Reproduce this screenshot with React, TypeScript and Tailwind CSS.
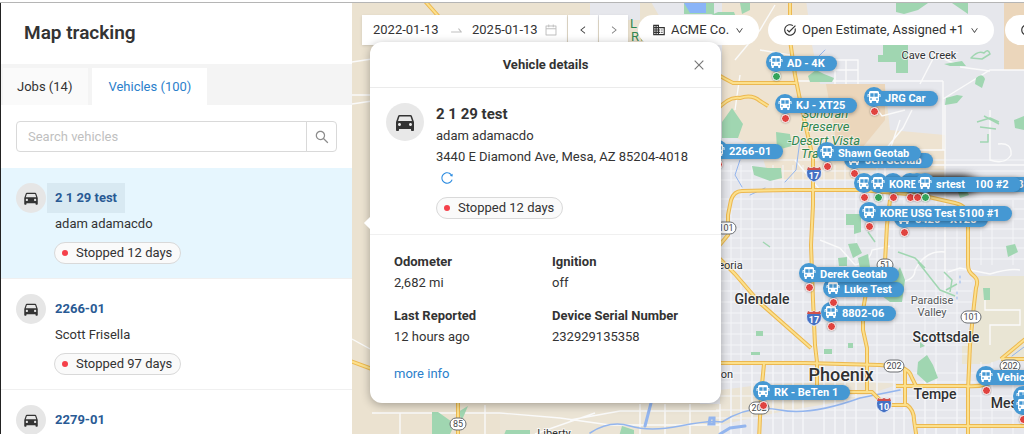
import type { ReactNode } from 'react'
import clsx from 'clsx'
import {
  AiOutlineCalendar,
  AiOutlineClose,
  AiOutlineDown,
  AiOutlineLeft,
  AiOutlineReload,
  AiOutlineRight,
  AiOutlineSearch,
  AiOutlineSwapRight,
} from 'react-icons/ai'
import { MdBusiness, MdDirectionsCar, MdTaskAlt } from 'react-icons/md'

type Vehicle = { name: string; driver: string; status: string }

const vehicles: Vehicle[] = [
  { name: '2 1 29 test', driver: 'adam adamacdo', status: 'Stopped 12 days' },
  { name: '2266-01', driver: 'Scott Frisella', status: 'Stopped 97 days' },
  { name: '2279-01', driver: '', status: '' },
]

const details = [
  { label: 'Odometer', value: '2,682 mi' },
  { label: 'Ignition', value: 'off' },
  { label: 'Last Reported', value: '12 hours ago' },
  { label: 'Device Serial Number', value: '232929135358' },
]

// x / y is the position dot, measured from the top left corner of the map
type Pin = { name?: string; x: number; y: number; moving?: boolean; crowded?: boolean }

const pins: Pin[] = [
  { name: '2266-01', x: 366, y: 161 },
  { name: 'AD - 4K', x: 424, y: 73, moving: true },
  { name: 'JRG Car', x: 522, y: 108 },
  { name: 'KJ - XT25', x: 433, y: 115 },
  { name: 'Jen Geotab', x: 502, y: 170 },
  { name: 'Shawn Geotab', x: 475, y: 163 },
  { x: 512, y: 194 },
  { x: 558, y: 194, crowded: true },
  { x: 565, y: 194, crowded: true },
  { name: 'KORE USG Test 5100 #3', x: 541, y: 194 },
  { name: 'KORE USG Test 5100 #2', x: 526, y: 194, moving: true },
  { name: 'srtest', x: 573, y: 194, moving: true, crowded: true },
  { name: '5420 - XT28', x: 552, y: 229 },
  { name: 'KORE USG Test 5100 #1', x: 517, y: 223 },
  { name: '8802-06', x: 479, y: 323 },
  { name: 'Luke Test', x: 481, y: 299 },
  { name: 'Derek Geotab', x: 457, y: 284 },
  { name: 'RK - BeTen 1', x: 411, y: 402 },
  { name: 'Vehicle 12', x: 634, y: 387 },
  { x: 671, y: 407 },
  { x: 671, y: 416 },
]

const highways = [
  'M790 0V40L795 75L802 110L813 158V205L811 245L813 300L815 345L817 362V388',
  'M718 247L728 235V215L731 200Q734 191 742 191L790 190H860L920 195L955 203Q968 206 968 218V265Q968 272 974 276Q979 280 976 288L974 305L970 345L968 390V440',
  'M890 200L887 225L885 262L868 282L863 310V330L867 348V392',
  'M718 257L735 274L760 303L811 348',
  'M715 363H805L880 365L900 367Q910 370 912 378L916 386H965Q985 388 1000 378',
  'M764 364L761 395L759 440',
  'M845 392H872L885 405H907Q914 410 914 420L917 440',
  'M905 370V405M896 386H920M915 426H1030M1001 359L1012 350L1030 335M1001 359H1030',
  'M715 73Q725 79 733 83H797M715 112Q728 96 740 98Q752 94 760 101L768 106',
  'M345 359L372 369M458 400V440M424 0L440 18',
]

const parks = [
  'M700 20L718 12H734L740 28H718V42H700Z',
  'M684 3H714V14H684ZM740 3H750V10L742 14Z',
  'M883 45H908V73H896V62H878V55H883ZM896 3H928L918 10L904 14L896 12ZM952 3H968V14Z',
  'M722 122L732 108L743 124L738 138H722ZM776 132L790 134L792 146L777 150ZM752 166L768 168L781 168L782 178L770 181L754 175Z',
  'M808 76L816 70L824 74L834 78L832 82L810 82Z',
  'M946 98L957 95L963 96L957 103L945 105ZM976 78Q982 72 985 79L982 88L975 84ZM846 214H861V232L854 234V225H846Z',
  'M848 244L857 243L862 253L853 258ZM838 258L847 257V266H839ZM858 258L868 254L870 267L860 269ZM900 267L905 280L902 302H890L882 296L886 280L896 274Z',
  'M983 288H990V300H984ZM1006 246L1015 244L1018 252L1008 257ZM918 362L927 355L933 365L938 378L927 383L917 374Z',
  'M756 331H763V336H756ZM824 349H832V354H824ZM848 343H853V348H848ZM751 352H760V355H751ZM920 342L925 346L920 348Z',
  'M432 412H438L455 424L447 440H432ZM506 430H530V440H502ZM622 426L634 430V440H618ZM458 412L468 406L462 420Z',
  'M957 189L965 187L969 195L960 198ZM1014 120L1024 116V130L1015 128ZM944 64L962 61L966 66L950 66Z',
]

const minorRoads = [
  'M795 81H943M943 81V150M820 60H858V84M835 60V84M846 60V84M808 70H858M943 99L990 70H1024M960 67L990 71M920 84L935 55L958 65',
  'M900 120L885 165V200M912 110L903 128L885 150M945 105V300M885 150H945M885 165H1024M915 190H1000M990 110V160Q1005 165 1011 155Q1012 142 998 144',
  'M735 60L760 30L775 5M740 75L735 110M760 50L790 55M870 100L882 116L905 110M795 160L820 190',
  'M372 413H500L560 418L610 425H720M400 413V434M485 405V434M535 434L595 413M640 404V434M665 404V434M690 404V434M720 404V434M570 420L620 411H720',
  'M352 62L372 59M352 95H372M352 104L372 101M352 339L372 350',
  'M900 282Q915 280 915 270Q925 250 945 252M820 240L840 248L855 265Q870 262 872 250L890 246M948 272L960 268L990 274Q1010 268 1020 270M985 290V310H1020V325H990V345',
]

const streetRows = [160, 171, 180, 199, 209, 219, 229, 238, 248, 259, 270, 281, 291, 302, 313, 323, 334, 345, 354, 373, 382, 396, 410, 418]
const streetCols = [731, 741, 752, 773, 783, 793, 803, 824, 835, 845, 856, 877, 894, 904, 925, 936, 957, 981, 992, 1013]

const routes = [
  { label: '51', x: 885, y: 265 },
  { label: '101', x: 971, y: 317 },
  { label: '202', x: 894, y: 366 },
  { label: '202', x: 1010, y: 366 },
  { label: '202', x: 759, y: 408 },
  { label: '101', x: 726, y: 228 },
  { label: '85', x: 458, y: 424 },
]

const interstates = [
  { label: '17', x: 814, y: 174 },
  { label: '17', x: 814, y: 318 },
  { label: '10', x: 884, y: 405 },
]

function MapBackground() {
  return (
    <svg
      className="absolute inset-0 h-full w-full font-['Roboto',sans-serif]"
      viewBox="352 3 672 431"
      preserveAspectRatio="xMinYMin slice"
      aria-hidden="true"
    >
      <rect x="352" y="0" width="672" height="440" fill="#e6e7ec" />
      {/* desert */}
      <path d="M352 0H700V440H352Z" fill="#ebe2d0" />
      <path d="M590 0H640V20H590ZM650 0H760L748 50L720 70H690Z" fill="#e6e7ec" />
      <path d="M722 0H806L812 45L820 84L885 85L890 130L945 135V190L890 165L850 180H770L760 150L722 130Z" fill="#eee3d1" />
      <path d="M826 84H885V120L862 148L836 140Z" fill="#ebd6bb" />
      <path d="M1004 3H1024V70H1004Z" fill="#ebd6bb" />
      <path d="M978 276H1024V358H1004L988 364H962V345L974 340Z" fill="#e9e5d4" />
      <path d="M720 390L760 385L850 380L900 384L850 400L780 412L720 425V440H500V404H720Z" fill="#ebe4d5" />

      {/* street grid */}
      <g stroke="#f4f5f8" strokeWidth="1" fill="none">
        {streetRows.map((y) => (
          <path key={y} d={`M716 ${y}H${y > 260 && y < 360 ? 972 : 1024}`} />
        ))}
        {streetCols.map((x) => (
          <path key={x} d={`M${x} ${x > 890 ? 200 : 165}V${x > 978 ? 265 : 434}M${x} 362V434`} />
        ))}
      </g>
      <g stroke="#fafafa" strokeWidth="1.4" fill="none">
        {minorRoads.map((d) => (
          <path key={d} d={d} />
        ))}
      </g>

      {parks.map((d) => (
        <path key={d} d={d} fill="#a0d6b1" />
      ))}
      <g fill="none" stroke="#a0d6b1" strokeWidth="1.5" strokeLinejoin="round">
        <path d="M971 58Q978 50 984 53Q988 48 990 54L982 59ZM977 122L990 118L999 122M980 127L996 129M984 116L999 124M980 142H988V134" />
        <path d="M898 252L915 258L925 268M918 262L940 290L955 296M944 272L952 280L950 292M946 290L957 284M868 232L875 242M763 242L770 247" />
      </g>

      {/* rivers and lakes */}
      <path d="M684 3H706V13H690Z" fill="#8ab4f8" />
      <g fill="none" stroke="#93b5ee" strokeLinecap="round">
        <path d="M590 433Q610 420 630 426T680 426T722 422Q750 404 780 410T860 398L900 390" strokeWidth="1.5" />
        <path d="M651 403L645 426M710 418H714V424H709ZM720 434L730 428L745 426" strokeWidth="3" />
        <path d="M740 160L735 175L742 187M800 140L796 170L785 182M750 195L765 188M815 60L825 50M1024 347L1012 356" strokeWidth="1" />
        <path d="M960 276V286M957 292V300" strokeWidth="1" strokeDasharray="2 3" />
      </g>

      {/* highways */}
      <g fill="none" stroke="#ecb850" strokeWidth="4">
        {highways.map((d) => (
          <path key={d} d={d} />
        ))}
      </g>
      <g fill="none" stroke="#fce08c" strokeWidth="2">
        {highways.map((d) => (
          <path key={d} d={d} />
        ))}
      </g>

      {routes.map((r) => (
        <g key={`${r.x}-${r.y}`}>
          <rect x={r.x - (r.label.length > 2 ? 10 : 8)} y={r.y - 6} width={r.label.length > 2 ? 20 : 16} height="12" rx="6" fill="#fff" stroke="#6a6d70" />
          <text x={r.x} y={r.y + 3} textAnchor="middle" fontSize="9" fill="#474a4d">{r.label}</text>
        </g>
      ))}
      {interstates.map((r) => (
        <g key={`${r.x}-${r.y}`}>
          <path d={`M${r.x - 6} ${r.y - 7}Q${r.x - 3} ${r.y - 5} ${r.x} ${r.y - 7}Q${r.x + 3} ${r.y - 5} ${r.x + 6} ${r.y - 7}Q${r.x + 11} ${r.y + 4} ${r.x} ${r.y + 8}Q${r.x - 11} ${r.y + 4} ${r.x - 6} ${r.y - 7}Z`} fill="#4571c4" stroke="#fff" strokeWidth="0.8" />
          <path d={`M${r.x - 6} ${r.y - 7}Q${r.x - 3} ${r.y - 5} ${r.x} ${r.y - 7}Q${r.x + 3} ${r.y - 5} ${r.x + 6} ${r.y - 7}L${r.x + 7} ${r.y - 4}H${r.x - 7}Z`} fill="#d2504a" />
          <text x={r.x} y={r.y + 5} textAnchor="middle" fontSize="9" fontWeight="700" fill="#fff">{r.label}</text>
        </g>
      ))}

      {/* place names */}
      <g fill="#2f3133" textAnchor="middle" stroke="#fff" strokeWidth="2" strokeOpacity="0.7" paintOrder="stroke">
        <text x="929" y="59" fontSize="11">Cave Creek</text>
        <text x="932" y="304" fontSize="11" fill="#55585b">Paradise</text>
        <text x="932" y="316" fontSize="11" fill="#55585b">Valley</text>
        <text x="762" y="304" fontSize="14" fontWeight="500">Glendale</text>
        <text x="841" y="381" fontSize="18" fontWeight="500">Phoenix</text>
        <text x="946" y="342" fontSize="14" fontWeight="500">Scottsdale</text>
        <text x="935" y="399" fontSize="14" fontWeight="500">Tempe</text>
        <text x="1008" y="408" fontSize="14" fontWeight="500">Mesa</text>
        <text x="727" y="269" fontSize="11">Peoria</text>
        <text x="727" y="378" fontSize="11">on</text>
        <text x="554" y="437" fontSize="11">Liberty</text>
      </g>
      <g fill="#2f8750" fontSize="13" fontStyle="italic" textAnchor="middle" stroke="#fff" strokeWidth="2" strokeOpacity="0.5" paintOrder="stroke">
        <text x="825" y="118">Sonoran</text>
        <text x="825" y="131">Preserve</text>
        <text x="824" y="145">-Desert Vista</text>
        <text x="813" y="158">Trail</text>
      </g>
      <g fill="#2f8750" fontSize="13">
        <text x="630" y="28">L</text>
        <text x="631" y="41">Rv</text>
      </g>
    </svg>
  )
}

function BusIcon() {
  return (
    <svg viewBox="0 0 14 14" className="size-[14px]" aria-hidden="true">
      <path
        fill="#fff"
        fillRule="evenodd"
        d="M3.5 1h7Q12 1 12 2.500V4h.8q.7 0 .7.7v2.300h-1V4.800H12V11h-.6v1.300q0 .7-.7.700h-.9q-.7 0-.7-.7V11H4.900v1.300q0 .7-.7.700h-.9q-.7 0-.7-.7V11H2V4.800h-.5V7h-1V4.700Q.5 4 1.200 4H2V2.500Q2 1 3.500 1ZM3.300 3.200V6.800H6.600V3.200ZM7.400 3.200V6.800H10.700V3.200ZM4 8.300a.8.8 0 1 0 .01 0ZM10 8.300a.8.8 0 1 0 .01 0Z"
      />
    </svg>
  )
}

function MapPin({ pin }: { pin: Pin }) {
  return (
    <div className="absolute" style={{ left: pin.x, top: pin.y }}>
      {pin.name && (
        <div
          className={clsx(
            'absolute -top-5 -left-2 flex h-[15px] items-center rounded-full bg-[#4598d3] pr-3 pl-[19px] text-[11px] leading-[15px] font-bold whitespace-nowrap text-white',
            !pin.crowded && 'shadow-[0_1px_4px_rgba(0,0,0,0.35)]',
          )}
        >
          {pin.name}
        </div>
      )}
      {/* many pins on one spot add up to a dark shadow */}
      {pin.crowded && !pin.name && (
        <div className="absolute -top-5 left-0 h-[15px] w-[60px] rounded-full shadow-[0_0_10px_rgba(0,0,0,0.7)]" />
      )}
      <div className="absolute -top-6 -left-[10px] flex size-5 items-center justify-center rounded-full bg-[#4598d3]">
        <BusIcon />
      </div>
      <div
        className={clsx(
          'absolute -top-1 -left-1 size-[9px] rounded-full border border-white shadow-[0_0_2px_rgba(0,0,0,0.4)]',
          pin.moving ? 'bg-[#34a35a]' : 'bg-[#e0433f]',
        )}
      />
    </div>
  )
}

function StatusBadge({ children }: { children: ReactNode }) {
  return (
    <span className="inline-flex h-[22px] items-center gap-2 rounded-full border border-[#d9d9d9] bg-[#fafafa] pr-2 pl-[7px] text-[13px] leading-5">
      <span className="size-[6px] rounded-full bg-[#f5404a]" />
      {children}
    </span>
  )
}

function Sidebar() {
  return (
    <aside className="flex w-[352px] shrink-0 flex-col overflow-hidden border-l border-[#222] bg-white">
      <h1 className="shrink-0 px-[23px] pt-[18px] pb-[19px] text-[19px] leading-6 font-semibold">Map tracking</h1>
      <div role="tablist" className="flex shrink-0 gap-1 bg-[#f4f4f4] pt-1 pl-[2px] text-[13px]">
        <button role="tab" aria-selected="false" className="h-[37px] bg-[#fafafa] pr-4 pl-[14px]">
          Jobs (14)
        </button>
        <button role="tab" aria-selected="true" className="h-[37px] bg-white px-4 text-[#2b80cb]">
          Vehicles (100)
        </button>
      </div>

      <form className="mx-[15px] my-4 flex h-[31px] shrink-0 text-[13px]" onSubmit={(e) => e.preventDefault()}>
        <input
          type="text"
          aria-label="Search vehicles"
          placeholder="Search vehicles"
          className="min-w-0 flex-1 rounded-l-sm border border-[#d9d9d9] px-[11px] outline-none placeholder:text-[#bfbfbf]"
        />
        <button type="submit" aria-label="Search" className="-ml-px flex w-[31px] items-center justify-center rounded-r-sm border border-[#d9d9d9]">
          <AiOutlineSearch className="size-4 text-[#8c8c8c]" />
        </button>
      </form>

      <ul className="min-h-0 flex-1 overflow-hidden">
        {vehicles.map((v, i) => (
          <li
            key={v.name}
            className={clsx('flex gap-[1px] border-b border-[#f0f0f0] px-[15px] pt-[15px] pb-[14px] text-[13px]', i === 0 && 'bg-[#e6f6fe]')}
          >
            <span className="flex size-[30px] shrink-0 items-center justify-center rounded-full bg-[#e6e6e6]">
              <MdDirectionsCar className="size-[18px]" />
            </span>
            <div>
              <a href="#" className={clsx('inline-block px-2 leading-[30px] font-bold text-[#295a94]', i === 0 && 'bg-[#d8e9f2]')}>
                {v.name}
              </a>
              <div className="px-2 leading-[22px]">{v.driver}</div>
              {v.status && (
                <div className="mt-[7px] flex px-[7px]">
                  <StatusBadge>{v.status}</StatusBadge>
                </div>
              )}
            </div>
          </li>
        ))}
      </ul>
    </aside>
  )
}

function Toolbar() {
  return (
    <div className="relative ml-[10px] flex h-[30px] text-[13px] whitespace-nowrap">
      <div className="flex w-[205px] shrink-0 items-center bg-white px-[11px] shadow-sm">
        <input aria-label="Start date" defaultValue="2022-01-13" className="w-[68px] outline-none" />
        <AiOutlineSwapRight className="mx-2 size-[15px] shrink-0 text-[#bfbfbf]" />
        <input aria-label="End date" defaultValue="2025-01-13" className="w-[72px] outline-none" />
        <AiOutlineCalendar className="size-[14px] shrink-0 text-[#bfbfbf]" />
      </div>
      <button aria-label="Previous" className="ml-px flex w-[30px] shrink-0 items-center justify-center bg-white shadow-sm">
        <AiOutlineLeft className="size-[10px]" />
      </button>
      <button aria-label="Next" className="ml-px flex w-[29px] shrink-0 items-center justify-center bg-white text-[#777] shadow-sm">
        <AiOutlineRight className="size-[10px]" />
      </button>

      <label className="ml-[10px] flex shrink-0 items-center gap-[5px] rounded-full bg-white pr-[15px] pl-[14px]">
        <MdBusiness className="size-[14px]" />
        <select aria-label="Company" className="appearance-none outline-none">
          <option>ACME Co.</option>
        </select>
        <AiOutlineDown className="size-[9px]" />
      </label>
      <label className="ml-[9px] flex shrink-0 items-center gap-[5px] rounded-full bg-white pr-[15px] pl-[15px]">
        <MdTaskAlt className="size-[14px]" />
        <select aria-label="Job status" className="appearance-none outline-none">
          <option>Open Estimate, Assigned +1</option>
        </select>
        <AiOutlineDown className="size-[9px]" />
      </label>
      <button aria-label="Device status" className="ml-[11px] flex w-20 shrink-0 items-center rounded-full bg-white pl-[15px]">
        <MdTaskAlt className="size-[14px]" />
      </button>
    </div>
  )
}

function VehicleCard() {
  return (
    <section className="absolute top-[39px] left-[18px] w-[351px] rounded-xl bg-white text-[13px] leading-[21px] shadow-[0_2px_10px_rgba(0,0,0,0.3)]">
      <span className="absolute top-[176px] -left-1 size-[10px] rotate-45 bg-white" />
      <header className="flex h-[46px] items-center border-b border-[#ebebeb] pr-[15px] pl-[29px]">
        <h2 className="flex-1 text-center font-bold">Vehicle details</h2>
        <button aria-label="Close">
          <AiOutlineClose className="size-[14px] text-[#777]" />
        </button>
      </header>

      <div className="flex gap-3 border-b border-[#f0f0f0] px-4 pt-[15px] pb-[15px]">
        <span className="flex size-[38px] shrink-0 items-center justify-center rounded-full bg-[#e8e8e8]">
          <MdDirectionsCar className="size-6" />
        </span>
        <div>
          <h3 className="text-[15px] leading-[22px] font-bold">2 1 29 test</h3>
          <p>adam adamacdo</p>
          <p>3440 E Diamond Ave, Mesa, AZ 85204-4018</p>
          <button aria-label="Refresh address" className="ml-1 flex h-[22px] items-center">
            <AiOutlineReload className="size-[14px] text-[#2b8be0]" />
          </button>
          <div className="mt-2 flex">
            <StatusBadge>Stopped 12 days</StatusBadge>
          </div>
        </div>
      </div>

      <div className="px-6 pt-4 pb-[19px]">
        <dl className="grid grid-cols-[158px_1fr] gap-y-3">
          {details.map((d) => (
            <div key={d.label}>
              <dt className="font-bold">{d.label}</dt>
              <dd>{d.value}</dd>
            </div>
          ))}
        </dl>
        <a href="#" className="mt-4 inline-block text-[#2b80cb]">
          more info
        </a>
      </div>
    </section>
  )
}

export default function App() {
  return (
    <div className="flex h-screen flex-col overflow-hidden bg-white pt-[3px] font-['Roboto',sans-serif] text-[#333]">
      <div className="flex min-h-0 flex-1 shadow-[0_-1px_0_#b5b5b5]">
        <Sidebar />
        <main className="relative min-w-0 flex-1 overflow-hidden pt-3">
          <MapBackground />
          {pins.map((p) => (
            <MapPin key={`${p.x}-${p.y}`} pin={p} />
          ))}
          <Toolbar />
          <VehicleCard />
        </main>
      </div>
    </div>
  )
}
